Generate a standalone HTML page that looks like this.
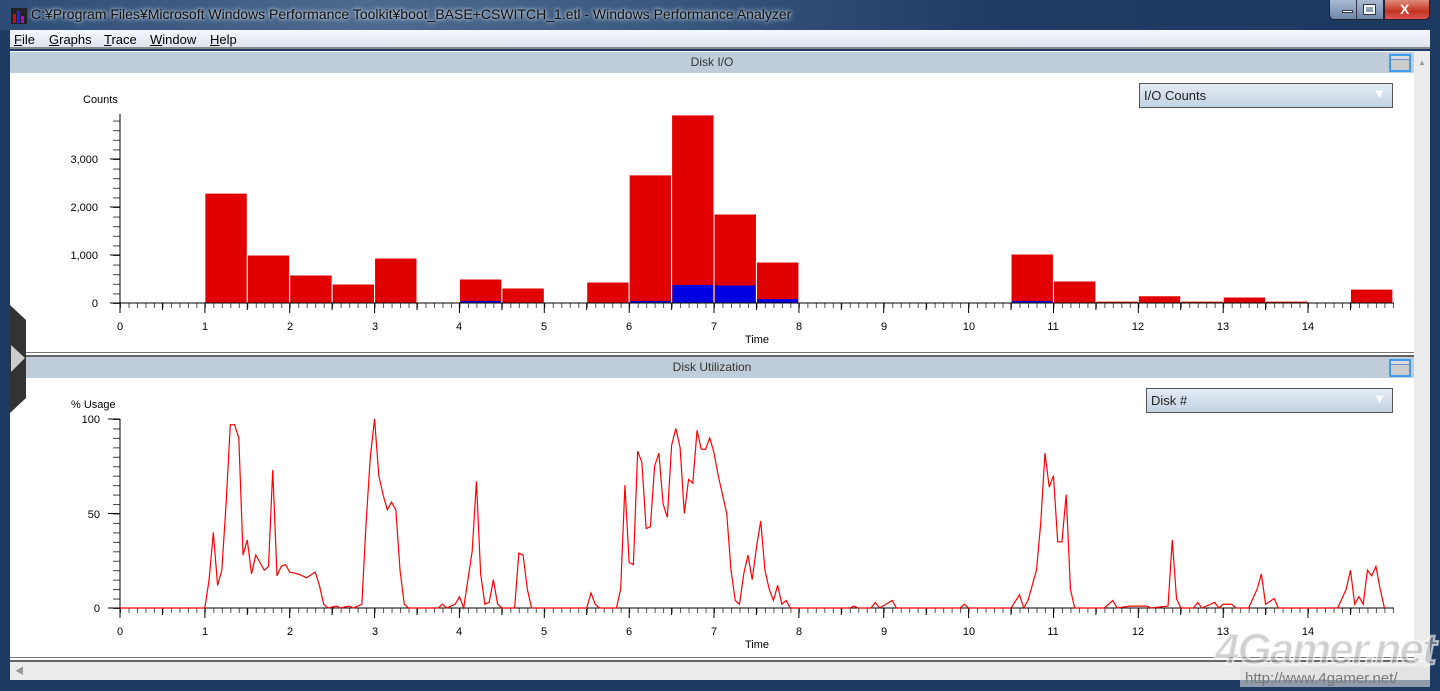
<!DOCTYPE html>
<html><head><meta charset="utf-8"><style>
*{margin:0;padding:0;box-sizing:border-box}
body{width:1440px;height:691px;overflow:hidden;position:relative;background:#1d3b62;font-family:"Liberation Sans","Noto Sans CJK JP",sans-serif}
.abs{position:absolute}
.title{left:0;top:0;width:1440px;height:30px;background:linear-gradient(90deg,#2d4c75 0%,#4d6a8e 25%,#3b5a80 45%,#1e3b63 70%,#1c3a60 100%)}
.title span{position:absolute;left:31px;top:6px;font-size:14px;color:#111;text-shadow:0 0 6px #c8d6e6,0 0 3px #dfe8f2}
.menu{left:10px;top:30px;width:1420px;height:19px;background:linear-gradient(#f5f7fb,#dde5f0);border-bottom:2px solid #888;font-size:13px;color:#000}
.menu span{position:absolute;top:2px}
.hdr{left:10px;width:1404px;height:21px;background:#bfcdda;font-size:12px;color:#333;text-align:center;line-height:21px}
.chart{left:10px;width:1404px;background:#fff}
.dd{border:1px solid #555;background:linear-gradient(#e4ecf5,#c3d2e2);font-size:13px;color:#222;padding:4px 0 0 4px}
.btnico{width:22px;height:18px;border:2px solid #3d9cf0;background:linear-gradient(#ddd 0 3px,#6b8fc4 3px 4px,#ccc 4px)}
</style></head><body>
<div class="abs title"><svg class="abs" style="left:11px;top:8px" width="16" height="16"><rect width="16" height="16" fill="#222"/><rect x="2" y="6" width="3" height="9" fill="#e00"/><rect x="6" y="3" width="3" height="12" fill="#22f"/><rect x="10" y="8" width="3" height="7" fill="#c0c"/></svg><span>C:¥Program Files¥Microsoft Windows Performance Toolkit¥boot_BASE+CSWITCH_1.etl - Windows Performance Analyzer</span></div>
<div class="abs" style="left:1329px;top:0;width:55px;height:20px;border:1px solid #223;border-top:0;border-radius:0 0 0 5px;background:linear-gradient(#a9bbd0,#6d87a8)"></div>
<div class="abs" style="left:1356px;top:0;width:1px;height:20px;background:#334"></div>
<div class="abs" style="left:1342px;top:10px;width:11px;height:3px;background:#fff;border:1px solid #334"></div>
<div class="abs" style="left:1364px;top:5px;width:11px;height:9px;border:2px solid #fff;outline:1px solid #334"></div>
<div class="abs" style="left:1384px;top:0;width:46px;height:20px;border:1px solid #223;border-top:0;border-radius:0 0 5px 0;background:linear-gradient(#e08a7a,#c2341f 60%,#d55)"></div>
<div class="abs" style="left:1400px;top:1px;color:#fff;font-weight:bold;font-size:14px">X</div>
<div class="abs menu"><span style="left:4px"><u>F</u>ile</span><span style="left:39px"><u>G</u>raphs</span><span style="left:94px"><u>T</u>race</span><span style="left:140px"><u>W</u>indow</span><span style="left:200px"><u>H</u>elp</span></div>
<div class="abs" style="left:10px;top:51px;width:1420px;height:629px;background:#fff"></div>
<div class="abs" style="left:1414px;top:51px;width:16px;height:610px;background:#ececec"></div>
<div class="abs" style="left:1418px;top:58px;font-size:8px;color:#999">▲</div>
<div class="abs hdr" style="top:52px">Disk I/O</div>
<div class="abs btnico" style="left:1389px;top:54px"></div>
<div class="abs hdr" style="top:357px">Disk Utilization</div>
<div class="abs btnico" style="left:1389px;top:359px"></div>
<div class="abs" style="left:10px;top:352px;width:1404px;height:1px;background:#777"></div>
<div class="abs" style="left:10px;top:355px;width:1404px;height:2px;background:#666"></div>
<div class="abs" style="left:10px;top:657px;width:1404px;height:1px;background:#777"></div>
<div class="abs" style="left:10px;top:660px;width:1404px;height:2px;background:#666"></div>
<div class="abs" style="left:10px;top:662px;width:1420px;height:18px;background:#ececec"></div>
<div class="abs" style="left:15px;top:664px;font-size:9px;color:#999">◀</div>
<div class="abs dd" style="left:1139px;top:83px;width:254px;height:25px">I/O Counts<span style="position:absolute;right:6px;top:2px;color:#fff;font-size:13px">▼</span></div>
<div class="abs dd" style="left:1146px;top:388px;width:247px;height:25px">Disk #<span style="position:absolute;right:6px;top:2px;color:#fff;font-size:13px">▼</span></div>

<svg class="abs" style="left:0;top:0" width="1440" height="691" font-family="Liberation Sans, sans-serif" font-size="11">
<defs>
<pattern id="mx" patternUnits="userSpaceOnUse" x="120" y="0" width="8.486" height="10"><rect x="0" y="0" width="1" height="10" fill="#555"/></pattern>
<pattern id="my1" patternUnits="userSpaceOnUse" x="0" y="303" width="10" height="9.6"><rect x="0" y="0" width="10" height="1" fill="#444"/></pattern>
<pattern id="my2" patternUnits="userSpaceOnUse" x="0" y="608" width="10" height="9.45"><rect x="0" y="0" width="10" height="1" fill="#444"/></pattern>
</defs>
<!-- chart1 bars -->
<g transform="translate(120,303) scale(84.86,-0.048)" stroke="#fff" stroke-width="1" vector-effect="non-scaling-stroke">
<g fill="#e00000">
<rect x="1.0" y="0" width="0.5" height="2290" vector-effect="non-scaling-stroke"/>
<rect x="1.5" y="0" width="0.5" height="1000" vector-effect="non-scaling-stroke"/>
<rect x="2.0" y="0" width="0.5" height="583" vector-effect="non-scaling-stroke"/>
<rect x="2.5" y="0" width="0.5" height="396" vector-effect="non-scaling-stroke"/>
<rect x="3.0" y="0" width="0.5" height="937" vector-effect="non-scaling-stroke"/>
<rect x="4.0" y="0" width="0.5" height="500" vector-effect="non-scaling-stroke"/>
<rect x="4.5" y="0" width="0.5" height="312" vector-effect="non-scaling-stroke"/>
<rect x="5.5" y="0" width="0.5" height="437" vector-effect="non-scaling-stroke"/>
<rect x="6.0" y="0" width="0.5" height="2670" vector-effect="non-scaling-stroke"/>
<rect x="6.5" y="0" width="0.5" height="3920" vector-effect="non-scaling-stroke"/>
<rect x="7.0" y="0" width="0.5" height="1854" vector-effect="non-scaling-stroke"/>
<rect x="7.5" y="0" width="0.5" height="854" vector-effect="non-scaling-stroke"/>
<rect x="10.5" y="0" width="0.5" height="1020" vector-effect="non-scaling-stroke"/>
<rect x="11.0" y="0" width="0.5" height="458" vector-effect="non-scaling-stroke"/>
<rect x="11.5" y="0" width="0.5" height="40" vector-effect="non-scaling-stroke"/>
<rect x="12.0" y="0" width="0.5" height="150" vector-effect="non-scaling-stroke"/>
<rect x="12.5" y="0" width="0.5" height="40" vector-effect="non-scaling-stroke"/>
<rect x="13.0" y="0" width="0.5" height="125" vector-effect="non-scaling-stroke"/>
<rect x="13.5" y="0" width="0.5" height="40" vector-effect="non-scaling-stroke"/>
<rect x="14.5" y="0" width="0.5" height="290" vector-effect="non-scaling-stroke"/>
</g>
<g fill="#0000e0" stroke="none">
<rect x="4.01" y="0" width="0.48" height="40"/>
<rect x="6.01" y="0" width="0.48" height="40"/>
<rect x="6.51" y="0" width="0.48" height="375"/>
<rect x="7.01" y="0" width="0.48" height="365"/>
<rect x="7.51" y="0" width="0.48" height="80"/>
<rect x="10.51" y="0" width="0.48" height="40"/>
</g></g>
<!-- chart1 axes -->
<rect x="120" y="303" width="1274" height="5" fill="url(#mx)"/>
<rect x="113" y="114" width="7" height="190" fill="url(#my1)"/>
<path d="M120,114V303H1394M110,303h10M110,255h10M110,207h10M110,159h10
M120,303v10M204.9,303v10M289.7,303v10M374.6,303v10M459.4,303v10M544.3,303v10M629.2,303v10M714,303v10M798.9,303v10M883.7,303v10M968.6,303v10M1053.5,303v10M1138.3,303v10M1223.2,303v10M1308,303v10
M162.4,303v7M247.3,303v7M332.1,303v7M417,303v7M501.9,303v7M586.7,303v7M671.6,303v7M756.4,303v7M841.3,303v7M926.2,303v7M1011,303v7M1095.9,303v7M1180.7,303v7M1265.6,303v7M1350.5,303v7" stroke="#000" stroke-width="1" fill="none"/>
<g text-anchor="middle" fill="#000"><text x="120" y="330">0</text><text x="205" y="330">1</text><text x="290" y="330">2</text><text x="375" y="330">3</text><text x="459" y="330">4</text><text x="544" y="330">5</text><text x="629" y="330">6</text><text x="714" y="330">7</text><text x="799" y="330">8</text><text x="884" y="330">9</text><text x="969" y="330">10</text><text x="1053" y="330">11</text><text x="1138" y="330">12</text><text x="1223" y="330">13</text><text x="1308" y="330">14</text><text x="757" y="343">Time</text><text x="757" y="648">Time</text>
<text x="120" y="635">0</text><text x="205" y="635">1</text><text x="290" y="635">2</text><text x="375" y="635">3</text><text x="459" y="635">4</text><text x="544" y="635">5</text><text x="629" y="635">6</text><text x="714" y="635">7</text><text x="799" y="635">8</text><text x="884" y="635">9</text><text x="969" y="635">10</text><text x="1053" y="635">11</text><text x="1138" y="635">12</text><text x="1223" y="635">13</text><text x="1308" y="635">14</text></g>
<g text-anchor="end" fill="#000"><text x="98" y="307">0</text><text x="98" y="259">1,000</text><text x="98" y="211">2,000</text><text x="98" y="163">3,000</text><text x="100" y="612">0</text><text x="100" y="518">50</text><text x="100" y="423">100</text></g>
<text x="83" y="103" fill="#000">Counts</text><text x="71" y="408" fill="#000">% Usage</text>
<!-- chart2 axes -->
<rect x="120" y="608" width="1274" height="5" fill="url(#mx)"/>
<rect x="113" y="419" width="7" height="190" fill="url(#my2)"/>
<path d="M120,419V608H1394M108,608h12M108,513.5h12M108,419h12
M120,608v10M204.9,608v10M289.7,608v10M374.6,608v10M459.4,608v10M544.3,608v10M629.2,608v10M714,608v10M798.9,608v10M883.7,608v10M968.6,608v10M1053.5,608v10M1138.3,608v10M1223.2,608v10M1308,608v10
M162.4,608v7M247.3,608v7M332.1,608v7M417,608v7M501.9,608v7M586.7,608v7M671.6,608v7M756.4,608v7M841.3,608v7M926.2,608v7M1011,608v7M1095.9,608v7M1180.7,608v7M1265.6,608v7M1350.5,608v7" stroke="#000" stroke-width="1" fill="none"/>
<g transform="translate(120,608) scale(84.86,-1.89)">
<polyline fill="none" stroke="#f00" stroke-width="1.2" vector-effect="non-scaling-stroke" points="0,0 1,0 1.05,15 1.1,40 1.15,12 1.2,20 1.25,55 1.3,97 1.35,97 1.4,90 1.45,28 1.5,36 1.55,18 1.6,28 1.65,24 1.7,20 1.75,22 1.8,73 1.85,17 1.9,22 1.95,23 2,19 2.1,18 2.2,16 2.3,19 2.35,12 2.4,2 2.45,0 2.55,1 2.6,0 2.7,1 2.75,0 2.85,2 2.9,45 2.95,80 3,100 3.05,70 3.1,60 3.15,52 3.2,56 3.25,52 3.3,20 3.35,2 3.4,0 3.75,0 3.8,2 3.85,0 3.95,2 4,6 4.05,0 4.15,30 4.2,67 4.25,18 4.3,2 4.35,3 4.4,15 4.45,2 4.5,0 4.65,0 4.7,29 4.75,28 4.8,10 4.85,0 5.5,0 5.55,8 5.6,2 5.65,0 5.85,0 5.9,10 5.95,65 6,24 6.05,23 6.1,83 6.15,77 6.2,42 6.25,43 6.3,75 6.35,82 6.4,55 6.45,48 6.5,86 6.55,95 6.6,85 6.65,50 6.7,68 6.75,66 6.8,94 6.85,84 6.9,84 6.95,90 7,82 7.05,70 7.15,50 7.2,20 7.25,4 7.3,2 7.35,18 7.4,28 7.45,15 7.5,32 7.55,46 7.6,20 7.65,10 7.7,4 7.75,12 7.8,2 7.85,4 7.9,0 8.6,0 8.65,1 8.7,0 8.85,0 8.9,3 8.95,0 9.1,4 9.15,0 9.9,0 9.95,2 10,0 10.5,0 10.6,7 10.65,0 10.7,4 10.8,20 10.85,45 10.9,82 10.95,64 11,70 11.05,35 11.1,35 11.15,60 11.2,10 11.25,0 11.6,0 11.7,4 11.75,0 11.9,1 12.1,1 12.15,0 12.35,1 12.4,36 12.45,5 12.5,0 12.65,0 12.7,3 12.75,0 12.9,3 12.95,0 13,2 13.1,2 13.15,0 13.3,0 13.35,5 13.4,10 13.45,18 13.5,2 13.6,5 13.65,0 14.35,0 14.45,10 14.5,20 14.55,2 14.6,6 14.65,2 14.7,20 14.75,17 14.8,22 14.85,10 14.9,0"/>
</g>
<!-- left tab -->
<polygon points="10,305 26,320 26,398 10,413" fill="#333"/>
<polygon points="11,345 25,358 11,372" fill="#ccc"/>
<!-- watermark -->
<text x="1215" y="664" font-size="44" font-weight="bold" fill="#aaa" fill-opacity="0.55" stroke="#fff" stroke-opacity="0.6" stroke-width="2" font-style="italic" letter-spacing="-2">4Gamer.net</text>
<rect x="1240" y="667" width="190" height="20" fill="#ddd" fill-opacity="0.6"/>
<text x="1245" y="683" font-size="15" fill="#777">http://www.4gamer.net/</text>
</svg>
</body></html>
